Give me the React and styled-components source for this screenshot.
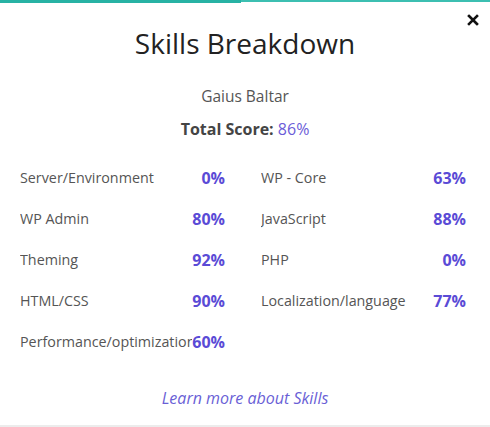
import React from "react";
import styled, { createGlobalStyle } from "styled-components";

const GlobalStyle = createGlobalStyle`
  html, body {
    margin: 0;
    padding: 0;
    background: #fff;
  }
  body {
    font-family: "Open Sans", "Noto Sans", sans-serif;
  }
`;

const skills = [
  { name: "Server/Environment", score: 0 },
  { name: "WP - Core", score: 63 },
  { name: "WP Admin", score: 80 },
  { name: "JavaScript", score: 88 },
  { name: "Theming", score: 92 },
  { name: "PHP", score: 0 },
  { name: "HTML/CSS", score: 90 },
  { name: "Localization/language", score: 77 },
  { name: "Performance/optimization", score: 60 },
];

const Modal = styled.div`
  position: relative;
  width: 490px;
  height: 427px;
  box-sizing: border-box;
  border-bottom: 2px solid #ececec;
  background: #fff;
  display: flex;
  flex-direction: column;
`;

const Progress = styled.div`
  height: 3px;
  display: flex;
  align-items: flex-start;
`;

const ProgressFill = styled.div`
  height: 3px;
  background: #27b2a4;
`;

const ProgressRest = styled.div`
  flex: 1;
  height: 2px;
  background: #3cbfb1;
`;

const Close = styled.button`
  position: absolute;
  top: 12px;
  right: 9px;
  border: 0;
  background: none;
  padding: 0;
  width: 16px;
  height: 16px;
  cursor: pointer;
  display: flex;
  align-items: center;
  justify-content: center;
`;

const Title = styled.h2`
  margin: 22px 0 0;
  text-align: center;
  font-size: 28px;
  line-height: 36px;
  font-weight: 400;
  color: #222;
`;

const Name = styled.div`
  margin-top: 24px;
  text-align: center;
  font-size: 15.5px;
  line-height: 22px;
  color: #555;
`;

const Total = styled.div`
  margin-top: 11px;
  text-align: center;
  font-size: 16px;
  line-height: 22px;
  color: #444;
  font-weight: 700;

  span {
    font-weight: 400;
    color: #6b5cd8;
  }
`;

const Grid = styled.div`
  margin: 28px 24px 0 20px;
  display: grid;
  grid-template-columns: 205px 205px;
  column-gap: 36px;
  row-gap: 21px;
`;

const Row = styled.div`
  display: flex;
  align-items: center;
  line-height: 20px;
`;

const Label = styled.span`
  flex: 1;
  min-width: 0;
  overflow: hidden;
  white-space: nowrap;
  font-size: 14.3px;
  color: #555;
`;

const Score = styled.span`
  font-size: 16px;
  font-weight: 700;
  color: #5a4bd6;
`;

const LearnMore = styled.a`
  margin-top: auto;
  margin-bottom: 16px;
  align-self: center;
  font-size: 16px;
  line-height: 22px;
  font-style: italic;
  color: #6a5fd6;
  text-decoration: none;
`;

export default function App() {
  const progress = 241;
  return (
    <>
      <GlobalStyle />
      <Modal>
        <Progress>
          <ProgressFill style={{ width: progress }} />
          <ProgressRest />
        </Progress>
        <Close aria-label="Close">
          <svg width="12" height="12" viewBox="0 0 12 12">
            <path
              d="M2 2 L10 10 M10 2 L2 10"
              stroke="#111"
              strokeWidth="2.6"
              strokeLinecap="square"
            />
          </svg>
        </Close>
        <Title>Skills Breakdown</Title>
        <Name>Gaius Baltar</Name>
        <Total>
          Total Score: <span>86%</span>
        </Total>
        <Grid>
          {skills.map((s) => (
            <Row key={s.name}>
              <Label>{s.name}</Label>
              <Score>{s.score}%</Score>
            </Row>
          ))}
        </Grid>
        <LearnMore href="#">Learn more about Skills</LearnMore>
      </Modal>
    </>
  );
}
